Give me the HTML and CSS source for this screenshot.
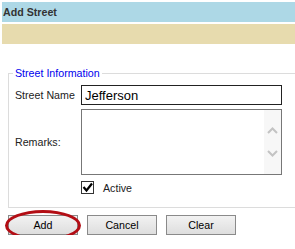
FILE: index.html
```html
<!DOCTYPE html>
<html lang="en">

<head>
    <meta charset="utf-8">
    <title>Add Street</title>
    <link rel="stylesheet" href="styles.css">
</head>

<body>
    <div class="title-bar">Add Street</div>
    <div class="tool-bar"></div>

    <fieldset class="group">
        <legend>Street Information</legend>
        <div class="form-grid">
            <label for="streetName">Street Name</label>
            <input type="text" id="streetName" class="text-input" value="Jefferson">

            <label for="remarks">Remarks:</label>
            <div class="remarks">
                <textarea id="remarks"></textarea>
                <div class="scroll">
                    <svg width="11" height="7" viewBox="0 0 11 7">
                        <polyline points="1,6 5.5,1.5 10,6" fill="none" stroke="#c3c3c3" stroke-width="2"/>
                    </svg>
                    <svg width="11" height="7" viewBox="0 0 11 7">
                        <polyline points="1,1 5.5,5.5 10,1" fill="none" stroke="#c3c3c3" stroke-width="2"/>
                    </svg>
                </div>
            </div>

            <div></div>
            <label class="active">
                <span class="check">
                    <svg width="11" height="11" viewBox="0 0 11 11">
                        <polyline points="1.5,5 4.5,8.5 10,1.5" fill="none" stroke="#000" stroke-width="2.2"/>
                    </svg>
                </span>
                Active
            </label>
        </div>
    </fieldset>

    <div class="buttons">
        <div class="marked">
            <button type="button">Add</button>
            <span class="ring"></span>
        </div>
        <button type="button">Cancel</button>
        <button type="button">Clear</button>
    </div>
</body>

</html>
```

FILE: styles.css
```css
body {
    margin: 2px 0 0 2px;
    font-family: "Liberation Sans", Arial, sans-serif;
    font-size: 8pt;
    color: #222;
    background-color: #fff;
}

.title-bar {
    height: 20px;
    line-height: 20px;
    padding-left: 1px;
    background-color: #ADD8E6;
    color: #333;
    font-weight: bold;
}

.tool-bar {
    height: 20px;
    margin-top: 2px;
    background-color: #E7DBAE;
}

.group {
    margin: 23px 0 0 6px;
    padding: 6px 0 11px 6px;
    border: 1px solid #dcdcdc;
    border-right: none;
}

.group legend {
    margin-left: -2px;
    padding: 0 2px;
    color: #0000ee;
    line-height: 12px;
}

.form-grid {
    display: grid;
    grid-template-columns: 66px 201px;
    grid-template-rows: 20px 66px 17px;
    row-gap: 4px;
    align-items: center;
}

.text-input {
    box-sizing: border-box;
    width: 201px;
    height: 20px;
    margin: 0;
    padding: 0 3px;
    border: 1px solid #222;
    font-family: "Liberation Sans", Arial, sans-serif;
    font-size: 13px;
    color: #000;
    outline: none;
}

.remarks {
    box-sizing: border-box;
    display: flex;
    height: 66px;
    border: 1px solid #777;
}

.remarks textarea {
    flex: 1;
    margin: 0;
    padding: 2px;
    border: none;
    resize: none;
    outline: none;
}

.scroll {
    width: 17px;
    display: flex;
    flex-direction: column;
    align-items: center;
    justify-content: center;
    gap: 16px;
    background-color: #f7f7f7;
}

.active {
    display: flex;
    align-items: center;
    gap: 9px;
}

.check {
    box-sizing: border-box;
    width: 13px;
    height: 13px;
    display: flex;
    align-items: center;
    justify-content: center;
    border: 1px solid #333;
    background-color: #fff;
}

.buttons {
    display: flex;
    gap: 9px;
    margin-top: 7px;
    padding-left: 6px;
}

.buttons button {
    width: 70px;
    height: 20px;
    padding: 0;
    border: 1px solid #8a8a8a;
    background: linear-gradient(#f2f2f2, #dedede);
    font-family: "Liberation Sans", Arial, sans-serif;
    font-size: 8pt;
    color: #000;
}

.marked {
    position: relative;
    display: flex;
}

.ring {
    position: absolute;
    left: -3px;
    top: -5px;
    width: 76px;
    height: 31px;
    box-sizing: border-box;
    border: 3px solid #b30d14;
    border-radius: 50%;
}
```
